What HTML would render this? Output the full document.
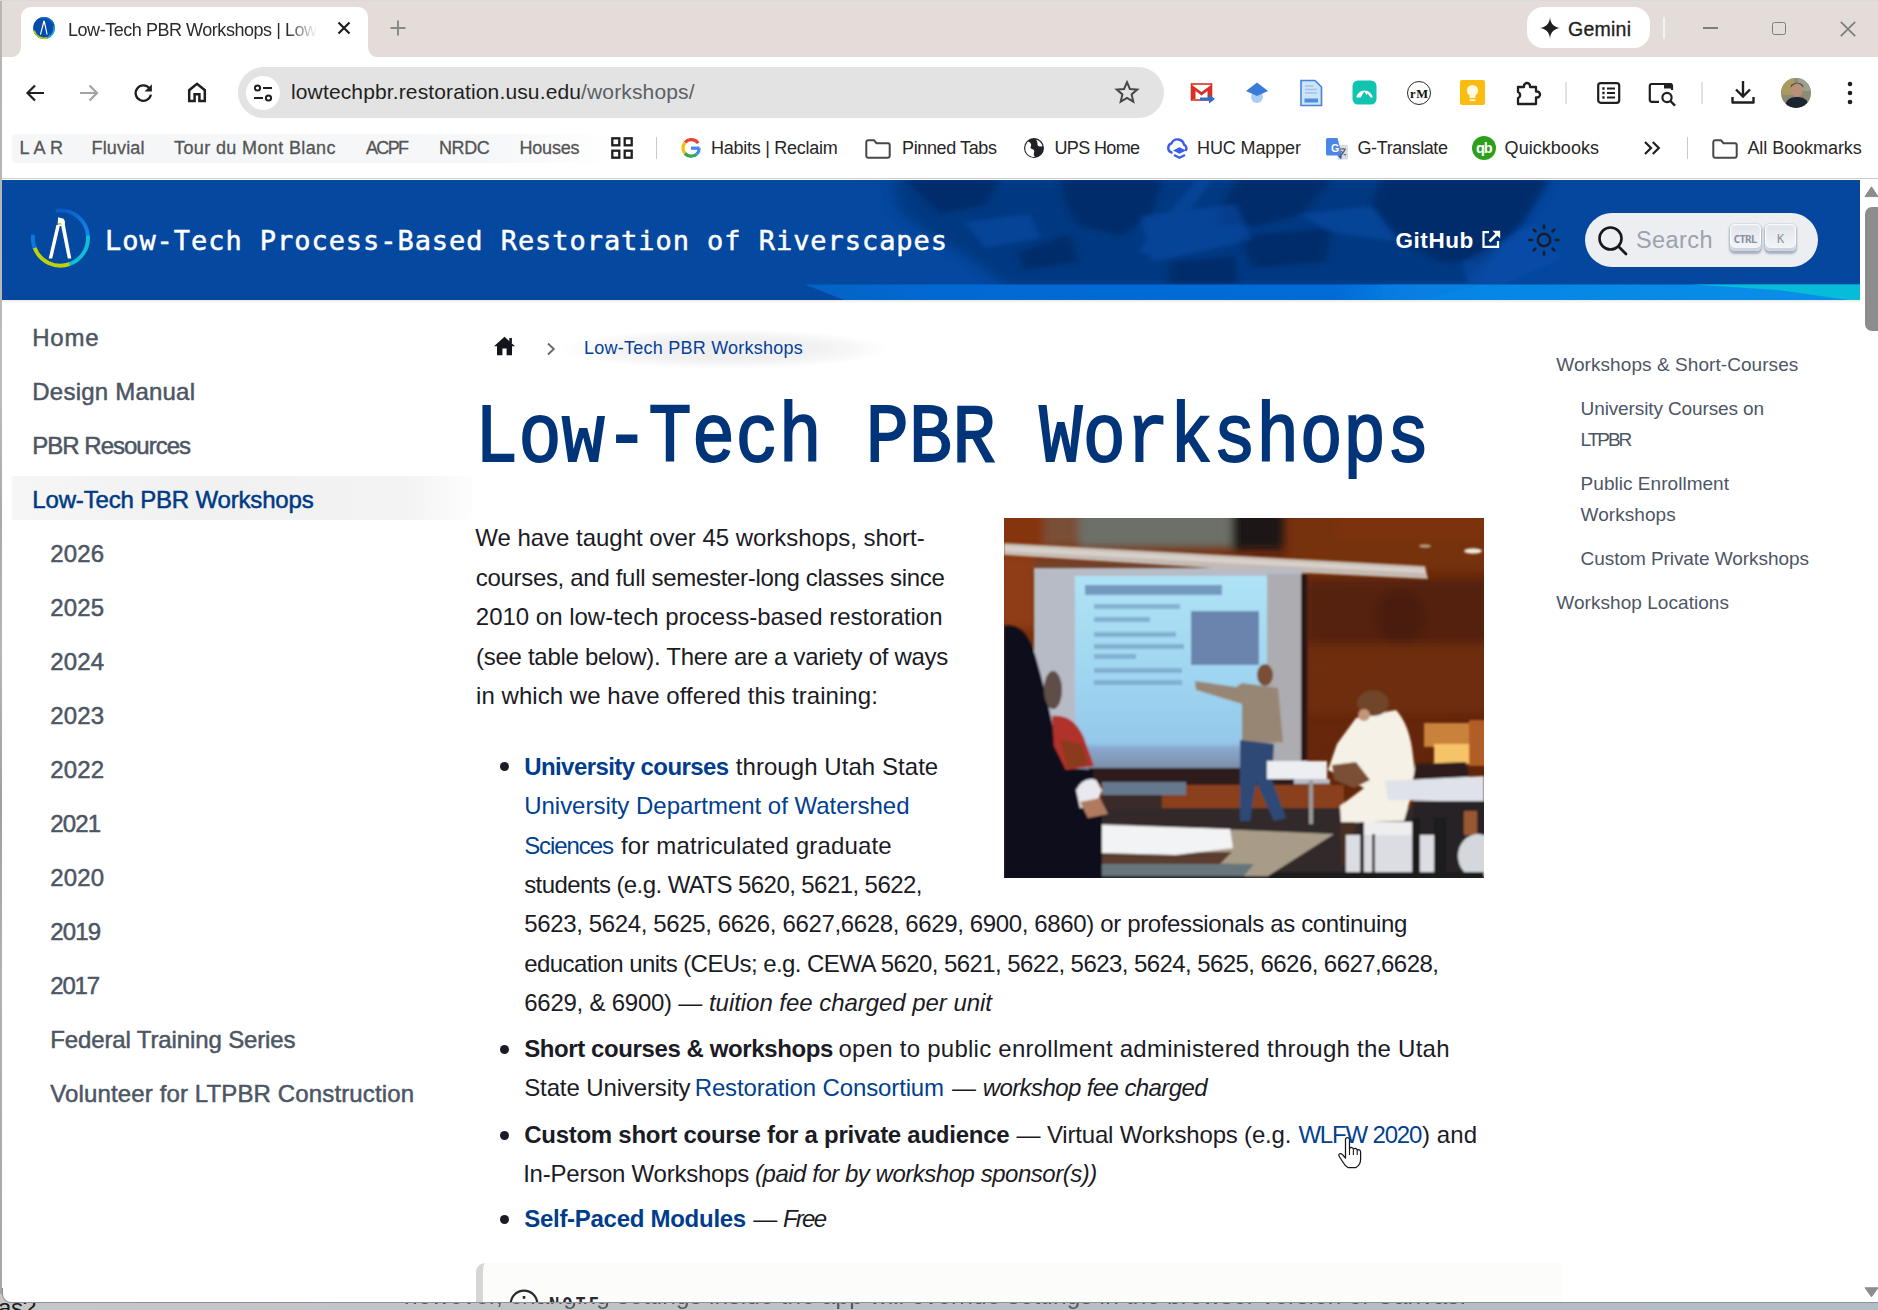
<!DOCTYPE html>
<html lang="en"><head><meta charset="utf-8"><title>Low-Tech PBR Workshops | Low-Tech Process-Based Restoration of Riverscapes</title>
<style>
html,body{margin:0;padding:0;background:#fff}
body{width:1878px;height:1310px;overflow:hidden;position:relative;font-family:'Liberation Sans', 'DejaVu Sans', sans-serif}
.t{position:absolute;display:block;white-space:nowrap;line-height:1;margin:0;padding:0;font-weight:400;font-style:normal;font-kerning:normal;text-decoration:none}
.a{position:absolute}
</style></head><body>
<nav class="g-sidebar">
<div class="a" style="left:12px;top:476px;width:460px;height:44px;background:linear-gradient(90deg,#f6f6f6,#f1f1f1 40%,#f3f3f3 85%,#fdfdfd);border-radius:3px"></div>
<a class="t" style="left:32.30px;top:326.10px;font-size:24px;letter-spacing:0.723px;color:#4d5664;-webkit-text-stroke:0.5px #4d5664;">Home</a>
<a class="t" style="left:32.30px;top:380.10px;font-size:24px;letter-spacing:0.217px;color:#4d5664;-webkit-text-stroke:0.5px #4d5664;">Design Manual</a>
<a class="t" style="left:32.30px;top:434.10px;font-size:24px;letter-spacing:-1.003px;color:#4d5664;-webkit-text-stroke:0.5px #4d5664;">PBR Resources</a>
<a class="t" style="left:32.30px;top:488.10px;font-size:24px;letter-spacing:-0.171px;color:#003a85;-webkit-text-stroke:0.5px #003a85;">Low-Tech PBR Workshops</a>
<a class="t" style="left:50.30px;top:542.10px;font-size:24px;letter-spacing:0.103px;color:#4d5664;-webkit-text-stroke:0.5px #4d5664;">2026</a>
<a class="t" style="left:50.30px;top:596.10px;font-size:24px;letter-spacing:0.103px;color:#4d5664;-webkit-text-stroke:0.5px #4d5664;">2025</a>
<a class="t" style="left:50.30px;top:650.10px;font-size:24px;letter-spacing:0.103px;color:#4d5664;-webkit-text-stroke:0.5px #4d5664;">2024</a>
<a class="t" style="left:50.30px;top:704.10px;font-size:24px;letter-spacing:0.103px;color:#4d5664;-webkit-text-stroke:0.5px #4d5664;">2023</a>
<a class="t" style="left:50.30px;top:758.10px;font-size:24px;letter-spacing:0.103px;color:#4d5664;-webkit-text-stroke:0.5px #4d5664;">2022</a>
<a class="t" style="left:50.30px;top:812.10px;font-size:24px;letter-spacing:-0.897px;color:#4d5664;-webkit-text-stroke:0.5px #4d5664;">2021</a>
<a class="t" style="left:50.30px;top:866.10px;font-size:24px;letter-spacing:0.103px;color:#4d5664;-webkit-text-stroke:0.5px #4d5664;">2020</a>
<a class="t" style="left:50.30px;top:920.10px;font-size:24px;letter-spacing:-0.897px;color:#4d5664;-webkit-text-stroke:0.5px #4d5664;">2019</a>
<a class="t" style="left:50.30px;top:974.10px;font-size:24px;letter-spacing:-1.230px;color:#4d5664;-webkit-text-stroke:0.5px #4d5664;">2017</a>
<a class="t" style="left:50.30px;top:1028.10px;font-size:24px;letter-spacing:-0.133px;color:#4d5664;-webkit-text-stroke:0.5px #4d5664;">Federal Training Series</a>
<a class="t" style="left:50.30px;top:1082.10px;font-size:24px;letter-spacing:0.128px;color:#4d5664;-webkit-text-stroke:0.5px #4d5664;">Volunteer for LTPBR Construction</a>
</nav>
<main class="g-content">
<div class="a" style="left:560px;top:329px;width:330px;height:40px;background:radial-gradient(ellipse 50% 50% at 50% 50%,#efefef 0,#f1f1f1 55%,#f8f8f8 80%,#fff 100%)"></div>
<svg class="a" style="left:493px;top:336px" width="23" height="20" viewBox="0 0 23 20"><path d="M11.5 0.8 L22 10.2 H19 V19.2 H13.6 V12.6 H9.4 V19.2 H4 V10.2 H1 Z" fill="#14141c"/><rect x="16.3" y="2" width="2.6" height="5" fill="#14141c"/></svg>
<svg class="a" style="left:545px;top:342px" width="12" height="14" viewBox="0 0 12 14"><path d="M3 1.5 L8.8 7 L3 12.5" stroke="#6a6a6a" stroke-width="1.9" fill="none"/></svg>
<div class="a" style="left:500px;top:762.0px;width:9px;height:9px;border-radius:5px;background:#1b1b25"></div>
<div class="a" style="left:500px;top:1044.5px;width:9px;height:9px;border-radius:5px;background:#1b1b25"></div>
<div class="a" style="left:500px;top:1130.5px;width:9px;height:9px;border-radius:5px;background:#1b1b25"></div>
<div class="a" style="left:500px;top:1214.9px;width:9px;height:9px;border-radius:5px;background:#1b1b25"></div>
<svg class="a" style="left:1336px;top:1136px" width="30" height="34" viewBox="0 0 30 34"><path d="M9.5 3.5 Q9.5 1.5 11.5 1.5 Q13.5 1.5 13.5 3.5 V13 Q13.7 11.4 15.4 11.4 Q17.2 11.4 17.4 13.4 Q17.8 12.2 19.4 12.3 Q21 12.5 21.2 14.4 Q21.8 13.5 23.2 13.8 Q24.6 14.2 24.6 16 V23 Q24.6 29 20 31.5 H12 Q9 30 6.5 25.5 L3 20 Q2.4 18.5 3.6 17.8 Q5 17.2 6.2 18.4 L9.5 22 Z" fill="#fff" stroke="#15151a" stroke-width="1.25" stroke-linejoin="round"/><path d="M13.5 13 V19 M17.4 14 V19 M21.2 15 V19" stroke="#15151a" stroke-width="1.1"/></svg>
<div class="a" style="left:476px;top:1263px;width:1086px;height:60px;background:#fcfcfb;border-left:7px solid #d6d6d6;border-top-left-radius:9px;box-sizing:border-box"></div>
<svg class="a" style="left:508.5px;top:1288.5px" width="30" height="30" viewBox="0 0 30 30"><circle cx="15" cy="15" r="13.3" stroke="#2a2a30" stroke-width="2.2" fill="none"/><rect x="13.7" y="7" width="2.6" height="2.8" fill="#2a2a30"/></svg>
<svg class="a" style="left:1004px;top:518px" width="480" height="360" viewBox="0 0 480 360">
<defs>
<filter id="pb" x="-2%" y="-2%" width="104%" height="104%"><feGaussianBlur stdDeviation="1.3"/></filter>
<filter id="pb2" x="-5%" y="-5%" width="110%" height="110%"><feGaussianBlur stdDeviation="4"/></filter>
<linearGradient id="wall" x1="0" x2="1" y1="0" y2="1"><stop offset="0" stop-color="#84350f"/><stop offset="0.5" stop-color="#6a280c"/><stop offset="1" stop-color="#5c230a"/></linearGradient>
<linearGradient id="slide" x1="0" x2="0" y1="0" y2="1"><stop offset="0" stop-color="#aee3f6"/><stop offset="0.5" stop-color="#a0d6f0"/><stop offset="0.86" stop-color="#94c8ea"/><stop offset="0.89" stop-color="#8aa6cc"/><stop offset="0.96" stop-color="#8098b4"/><stop offset="1" stop-color="#76889a"/></linearGradient>
<clipPath id="pc"><rect width="480" height="360"/></clipPath>
</defs>
<g clip-path="url(#pc)">
<rect width="480" height="360" fill="url(#wall)"/>
<g filter="url(#pb2)">
<rect x="-10" y="-8" width="60" height="36" fill="#85360f"/>
<rect x="40" y="-8" width="40" height="36" fill="#7a5038"/>
<rect x="75" y="-8" width="160" height="38" fill="#6d7068"/>
<rect x="228" y="-10" width="52" height="42" fill="#1c1716"/>
<rect x="285" y="-8" width="210" height="62" fill="#74300f"/>
<rect x="330" y="-8" width="160" height="30" fill="#7c3311"/>
<ellipse cx="397" cy="100" rx="24" ry="28" fill="#2a1416"/>
<rect x="302" y="62" width="190" height="70" fill="#50200c" opacity="0.8"/>
<rect x="302" y="125" width="190" height="70" fill="#70300f" opacity="0.8"/>
<rect x="-5" y="38" width="36" height="72" fill="#8f3c16"/>
<rect x="30" y="44" width="215" height="10" fill="#6e4a34"/>
</g>
<g filter="url(#pb)">
<path d="M0 25 L240 38 L421 48 L424 61 L240 52 L0 37 Z" fill="#c4bab2"/>
<path d="M0 28 L240 41 L421 51 L421 55 L240 46 L0 33 Z" fill="#d8d0ca"/>
<ellipse cx="469" cy="33" rx="9" ry="2.8" fill="#efe6da"/>
<ellipse cx="421" cy="28" rx="6" ry="1.8" fill="#b89a84"/>
<rect x="30" y="50" width="268" height="200" fill="#b7bbc6"/>
<rect x="263" y="56" width="35" height="192" fill="#adacb0"/>
<rect x="71" y="58" width="192" height="194" fill="url(#slide)"/>
<rect x="81" y="67" width="137" height="10" fill="#6a8cb4" opacity="0.85"/>
<g fill="#7aa6c8" opacity="0.8"><rect x="90" y="86" width="86" height="5"/><rect x="90" y="99" width="56" height="5"/><rect x="90" y="114" width="82" height="5"/><rect x="90" y="126" width="90" height="5"/><rect x="90" y="136" width="42" height="5"/><rect x="90" y="150" width="88" height="5"/><rect x="90" y="162" width="88" height="5"/></g>
<rect x="187" y="93" width="68" height="54" fill="#6a84ae"/>
<rect x="297" y="56" width="6" height="194" fill="#2c1414"/>
<!-- lower area -->
<rect x="85" y="250" width="218" height="17" fill="#2e1e1c"/>
<rect x="150" y="267" width="190" height="24" fill="#8a401a"/>
<rect x="0" y="290" width="480" height="70" fill="#33292a"/>
<rect x="98" y="264" width="84" height="13" fill="#66788c"/>
<rect x="98" y="277" width="60" height="14" fill="#3a2c2c"/>
<!-- presenter -->
<path d="M191 163 L232 169 L238 165 L274 170 L279 224 L238 226 L238 186 L192 172 Z" fill="#988674"/>
<ellipse cx="261" cy="157" rx="8" ry="11" fill="#7a4e34"/>
<path d="M236 222 L270 226 L268 262 L282 300 L270 303 L252 264 L246 303 L236 303 Z" fill="#2f4a74"/>
<!-- center desk -->
<rect x="263" y="243" width="60" height="18" fill="#eceef2"/>
<rect x="290" y="261" width="36" height="5" fill="#b8bcc4"/>
<rect x="305" y="262" width="4" height="44" fill="#9a9a9a"/>
<!-- right person -->
<path d="M352 200 L392 192 Q404 205 408 230 L412 262 L400 303 L337 305 L336 288 L360 270 L324 252 L333 226 Z" fill="#f6f1e6"/>
<path d="M328 247 L352 244 L366 262 L350 270 L330 262 Z" fill="#7a5034"/>
<ellipse cx="369" cy="185" rx="16" ry="13" fill="#70452a"/>
<ellipse cx="360" cy="197" rx="6" ry="6" fill="#c49678"/>
<path d="M336 304 L351 304 L350 346 L338 348 Z" fill="#4a2e24"/>
<!-- lamp etc -->
<rect x="420" y="205" width="46" height="24" fill="#c8823a"/>
<rect x="430" y="226" width="35" height="20" fill="#f6c468"/>
<rect x="465" y="202" width="20" height="46" fill="#b25c26"/>
<path d="M412 246 L462 244 L466 262 L408 266 Z" fill="#2e1c1c"/>
<path d="M381 263 L480 258 L480 284 L384 282 Z" fill="#dfe2ea"/>
<rect x="409" y="283" width="75" height="80" fill="#262226"/>
<rect x="460" y="293" width="13" height="24" fill="#9a5830"/>
<rect x="360" y="304" width="50" height="13" fill="#eeeeee"/>
<rect x="342" y="317" width="92" height="40" fill="#dcdde2"/>
<rect x="356" y="304" width="4" height="56" fill="#2a2426"/>
<rect x="368" y="316" width="3" height="40" fill="#3a3436"/>
<rect x="408" y="300" width="8" height="60" fill="#1e1a1e"/>
<rect x="430" y="300" width="12" height="60" fill="#1e1a1e"/>
<ellipse cx="474" cy="338" rx="20" ry="22" fill="#d4d8dc"/>
<rect x="0" y="354" width="480" height="8" fill="#1e1a1c"/>
<!-- bottom table -->
<path d="M98 306 L330 316 L264 358 L98 358 Z" fill="#a89c88"/>
<path d="M98 344 L250 346 L240 358 L98 358 Z" fill="#66767a"/>
<path d="M98 334 L228 334 L216 346 L98 346 Z" fill="#5a3c2e"/>
<path d="M98 307 L226 311 L229 330 L172 337 L98 335 Z" fill="#f2f3f5"/>
<!-- left silhouettes -->
<path d="M0 108 Q22 104 32 140 Q42 175 48 205 L62 250 L90 252 L86 268 L98 300 L98 362 L0 362 Z" fill="#0c0e1a"/>
<ellipse cx="49" cy="172" rx="9" ry="19" fill="#5e4e46"/>
<path d="M48 198 Q70 196 80 220 L90 248 L62 252 L50 228 Z" fill="#b0302c"/>
<path d="M56 222 L78 226 L84 246 L64 250 Z" fill="#8a3a1c"/>
<path d="M72 272 Q80 258 92 262 L98 272 L92 288 L76 290 Z" fill="#e8e8ee"/>
<path d="M76 284 L96 280 L104 296 L84 300 Z" fill="#b07a60"/>
</g>
</g>
</svg>
<a class="t" style="left:584.00px;top:339.30px;font-size:18px;letter-spacing:0.240px;color:#073f97;">Low-Tech PBR Workshops</a>
<h1 class="t" style="left:475.00px;top:397.30px;font-size:84px;letter-spacing:0.477px;transform:scaleX(0.853);transform-origin:0 0;color:#013478;font-family:'Liberation Mono', 'DejaVu Sans Mono', monospace;-webkit-text-stroke:2px #013478;">Low-Tech PBR Workshops</h1>
<p class="t" style="left:475.30px;top:526.20px;font-size:24px;letter-spacing:-0.027px;color:#1b1b25;">We have taught over 45 workshops, short-</p>
<p class="t" style="left:475.80px;top:565.70px;font-size:24px;letter-spacing:-0.316px;color:#1b1b25;">courses, and full semester-long classes since</p>
<p class="t" style="left:475.80px;top:605.30px;font-size:24px;letter-spacing:-0.006px;color:#1b1b25;">2010 on low-tech process-based restoration</p>
<p class="t" style="left:476.00px;top:644.80px;font-size:24px;letter-spacing:-0.285px;color:#1b1b25;">(see table below). There are a variety of ways</p>
<p class="t" style="left:476.00px;top:684.40px;font-size:24px;letter-spacing:0.053px;color:#1b1b25;">in which we have offered this training:</p>
<a class="t" style="left:524.20px;top:755.00px;font-size:24px;letter-spacing:-0.575px;color:#013d8c;font-weight:700;">University courses</a>
<span class="t" style="left:735.80px;top:755.00px;font-size:24px;letter-spacing:0.055px;color:#1b1b25;">through Utah State</span>
<a class="t" style="left:524.20px;top:794.30px;font-size:24px;letter-spacing:-0.019px;color:#023f8f;">University Department of Watershed</a>
<a class="t" style="left:524.20px;top:833.60px;font-size:24px;letter-spacing:-1.099px;color:#023f8f;">Sciences</a>
<span class="t" style="left:621.00px;top:833.60px;font-size:24px;letter-spacing:0.158px;color:#1b1b25;">for matriculated graduate</span>
<span class="t" style="left:524.20px;top:872.70px;font-size:24px;letter-spacing:-0.576px;color:#1b1b25;">students (e.g. WATS 5620, 5621, 5622,</span>
<span class="t" style="left:524.20px;top:911.80px;font-size:24px;letter-spacing:-0.361px;color:#1b1b25;">5623, 5624, 5625, 6626, 6627,6628, 6629, 6900, 6860) or professionals as continuing</span>
<span class="t" style="left:524.20px;top:951.50px;font-size:24px;letter-spacing:-0.569px;color:#1b1b25;">education units (CEUs; e.g. CEWA 5620, 5621, 5622, 5623, 5624, 5625, 6626, 6627,6628,</span>
<span class="t" style="left:524.20px;top:990.80px;font-size:24px;letter-spacing:-0.240px;color:#1b1b25;">6629, &amp; 6900) —</span>
<em class="t" style="left:709.00px;top:990.80px;font-size:24px;letter-spacing:-0.045px;color:#1b1b25;font-style:italic;">tuition fee charged per unit</em>
<strong class="t" style="left:524.20px;top:1037.40px;font-size:24px;letter-spacing:-0.402px;color:#1b1b25;font-weight:700;">Short courses &amp; workshops</strong>
<span class="t" style="left:838.50px;top:1037.40px;font-size:24px;letter-spacing:0.246px;color:#1b1b25;">open to public enrollment administered through the Utah</span>
<span class="t" style="left:524.20px;top:1076.40px;font-size:24px;letter-spacing:-0.118px;color:#1b1b25;">State University</span>
<a class="t" style="left:694.70px;top:1076.40px;font-size:24px;letter-spacing:-0.129px;color:#023f8f;">Restoration Consortium</a>
<span class="t" style="left:952.00px;top:1076.40px;font-size:24px;letter-spacing:-1.000px;color:#1b1b25;">—</span>
<em class="t" style="left:982.70px;top:1076.40px;font-size:24px;letter-spacing:-0.592px;color:#1b1b25;font-style:italic;">workshop fee charged</em>
<strong class="t" style="left:524.20px;top:1122.50px;font-size:24px;letter-spacing:-0.262px;color:#1b1b25;font-weight:700;">Custom short course for a private audience</strong>
<span class="t" style="left:1016.60px;top:1122.50px;font-size:24px;letter-spacing:-0.185px;color:#1b1b25;">— Virtual Workshops (e.g.</span>
<a class="t" style="left:1298.40px;top:1122.50px;font-size:24px;letter-spacing:-1.172px;color:#023f8f;">WLFW 2020</a>
<span class="t" style="left:1422.00px;top:1122.50px;font-size:24px;letter-spacing:0.074px;color:#1b1b25;">) and</span>
<span class="t" style="left:523.20px;top:1162.40px;font-size:24px;letter-spacing:-0.235px;color:#1b1b25;">In-Person Workshops</span>
<em class="t" style="left:755.00px;top:1162.40px;font-size:24px;letter-spacing:-0.474px;color:#1b1b25;font-style:italic;">(paid for by workshop sponsor(s))</em>
<a class="t" style="left:524.20px;top:1207.30px;font-size:24px;letter-spacing:-0.278px;color:#013d8c;font-weight:700;">Self-Paced Modules</a>
<span class="t" style="left:753.20px;top:1207.30px;font-size:24px;letter-spacing:-1.600px;color:#1b1b25;">—</span>
<em class="t" style="left:783.00px;top:1207.30px;font-size:24px;letter-spacing:-1.786px;color:#1b1b25;font-style:italic;">Free</em>
<div class="t" style="left:549.00px;top:1295.60px;font-size:17px;letter-spacing:3.016px;color:#2a2a30;font-weight:700;font-family:'DejaVu Sans Mono', 'Liberation Mono', monospace;">NOTE</div>
</main>
<aside class="g-toc">
<a class="t" style="left:1556.30px;top:354.90px;font-size:19px;letter-spacing:0.066px;color:#4d5664;">Workshops &amp; Short-Courses</a>
<a class="t" style="left:1580.60px;top:398.80px;font-size:19px;letter-spacing:-0.122px;color:#4d5664;">University Courses on</a>
<a class="t" style="left:1580.60px;top:429.80px;font-size:19px;letter-spacing:-2.036px;color:#4d5664;">LTPBR</a>
<a class="t" style="left:1580.60px;top:474.00px;font-size:19px;letter-spacing:0.035px;color:#4d5664;">Public Enrollment</a>
<a class="t" style="left:1580.60px;top:505.40px;font-size:19px;letter-spacing:0.052px;color:#4d5664;">Workshops</a>
<a class="t" style="left:1580.60px;top:549.00px;font-size:19px;letter-spacing:-0.063px;color:#4d5664;">Custom Private Workshops</a>
<a class="t" style="left:1556.30px;top:593.00px;font-size:19px;letter-spacing:0.052px;color:#4d5664;">Workshop Locations</a>
</aside>
<header class="g-site-header">
<svg class="a" style="left:2px;top:180px" width="1858" height="120" viewBox="0 0 1858 120">
<defs>
<linearGradient id="hb" x1="0" x2="1" y1="0" y2="0"><stop offset="0" stop-color="#05489f"/><stop offset="0.45" stop-color="#04489f"/><stop offset="0.85" stop-color="#04479f"/><stop offset="1" stop-color="#05479e"/></linearGradient>
<linearGradient id="lb" gradientUnits="userSpaceOnUse" x1="805" x2="1858" y1="0" y2="0"><stop offset="0" stop-color="#0462c4"/><stop offset="0.12" stop-color="#0369d2"/><stop offset="0.5" stop-color="#026bd6"/><stop offset="0.58" stop-color="#0584e4"/><stop offset="1" stop-color="#0a8fe8"/></linearGradient>
<filter id="bl" x="-5%" y="-30%" width="110%" height="160%"><feGaussianBlur stdDeviation="7 4"/></filter>
<filter id="bl2" x="-5%" y="-30%" width="110%" height="160%"><feGaussianBlur stdDeviation="3.5 2"/></filter>
<clipPath id="hc"><rect width="1858" height="120"/></clipPath>
</defs>
<g clip-path="url(#hc)">
<rect width="1858" height="120" fill="url(#hb)"/>
<polygon filter="url(#bl)" points="890,0 1546,0 1523,35 1493,70 1468,105 1003,105 963,75 928,55 898,32" fill="#04397f" opacity="0.92"/>
<g filter="url(#bl2)" fill="#022a68" opacity="0.85">
<polygon points="1058,0 1160,0 1150,34 1120,56 1076,46 1064,25"/>
<polygon points="1234,0 1330,0 1300,34 1258,46 1214,44 1224,20"/>
<polygon points="1016,72 1068,54 1076,82 1022,90"/>
<polygon points="1378,0 1546,0 1520,44 1480,82 1438,82 1398,62 1370,26"/>
<polygon points="1238,56 1330,48 1324,82 1250,88"/>
<polygon points="903,0 998,0 983,25 938,34"/>
<polygon points="1168,82 1233,76 1236,104 1166,104"/>
</g>
<g filter="url(#bl2)" fill="#0a50ae" opacity="0.5">
<polygon points="1136,72 1194,0 1210,0 1154,76"/>
<polygon points="1138,36 1234,24 1250,60 1150,82"/>
<polygon points="1460,82 1530,44 1560,78 1500,105 1466,105"/>
<polygon points="1298,34 1370,26 1398,62 1328,52"/>
<polygon points="963,42 1028,34 1038,58 983,68"/>
</g>
<path d="M803 104.6 L1858 104.6 L1858 120 L842 120 Z" fill="url(#lb)"/>
<path d="M1690 104.6 L1858 104.6 L1858 120 L1846 120 L1780 110.5 Z" fill="#06bcd8"/>
<path d="M1380 104.6 L1480 104.6 L1420 120 L1380 120 Z" fill="#0a7be0" opacity="0.5"/>
</g>
</svg>
<div class="a" style="left:2px;top:300px;width:1858px;height:3px;background:linear-gradient(180deg,rgba(0,0,0,.09),rgba(0,0,0,0))"></div>
<svg class="a" style="left:28px;top:206px" width="66" height="66" viewBox="0 0 66 66">
<defs><linearGradient id="lg1" x1="0.2" y1="0" x2="1" y2="1"><stop offset="0" stop-color="#0a5cc4"/><stop offset="0.5" stop-color="#0f74d8"/><stop offset="1" stop-color="#1488e8"/></linearGradient></defs>
<path d="M27.61 4.82 A27.6 27.6 0 0 1 59.93 30.07" stroke="url(#lg1)" stroke-width="3.9" fill="none"/>
<path d="M59.89 29.59 A27.6 27.6 0 0 1 40.93 58.25" stroke="#0fbfd8" stroke-width="3.9" fill="none"/>
<path d="M41.39 58.10 A27.6 27.6 0 0 1 6.46 41.44" stroke="#bdd20c" stroke-width="3.9" fill="none"/>
<path d="M6.63 41.89 A27.6 27.6 0 0 1 5.01 28.64" stroke="#0f78dc" stroke-width="3.9" fill="none"/>
<path d="M30.1 11.2 L35.6 12.8 L36.9 15.2 L36.9 20 L29.6 20 Z M28.4 19 L32 19 L24.2 52.6 L20.7 52.6 Z M33 19 L36.9 19 L43.3 52.6 L39.8 52.6 Z" fill="#fff"/>
<rect x="29.9" y="16.9" width="3.4" height="1.8" rx="0.8" fill="#bdd20c"/>
</svg>
<svg class="a" style="left:1481px;top:229px" width="21" height="20" viewBox="0 0 21 20"><path d="M8 3.2 H2.5 V17.8 H17 V12" stroke="#fff" stroke-width="2.2" fill="none"/><path d="M11.5 1.8 H19.2 V9.5 Z" fill="#fff"/><path d="M8.5 12.5 L17 4" stroke="#fff" stroke-width="2.6" fill="none"/></svg>
<svg class="a" style="left:1526px;top:222px" width="36" height="36" viewBox="0 0 36 36"><g stroke="#171b2a" stroke-width="2.4" fill="none" stroke-linecap="round"><circle cx="18" cy="18" r="6.2"/><path d="M18 3.5 V6 M18 30 V32.5 M3.5 18 H6 M30 18 H32.5 M7.7 7.7 L9.5 9.5 M26.5 26.5 L28.3 28.3 M7.7 28.3 L9.5 26.5 M26.5 9.5 L28.3 7.7"/></g></svg>
<div class="a" style="left:1585px;top:213px;width:233px;height:54px;border-radius:27px;background:#eceef2"></div>
<svg class="a" style="left:1595px;top:224px" width="34" height="34" viewBox="0 0 34 34"><circle cx="15.5" cy="14.5" r="11" stroke="#17171c" stroke-width="2.6" fill="none"/><path d="M23.5 22.5 L31 30" stroke="#17171c" stroke-width="2.8" stroke-linecap="round"/></svg>
<div class="a" style="left:1730px;top:224px;width:31px;height:27px;border-radius:5px;background:linear-gradient(180deg,#dfe3ea,#f6f7fa);box-shadow:inset 0 -3px 0 #cdd3df,inset 0 0 1.5px 1px #fff,0 1.5px 2px 1px rgba(40,60,100,.35)"></div>
<div class="a" style="left:1765px;top:224px;width:31px;height:27px;border-radius:5px;background:linear-gradient(180deg,#dfe3ea,#f6f7fa);box-shadow:inset 0 -3px 0 #cdd3df,inset 0 0 1.5px 1px #fff,0 1.5px 2px 1px rgba(40,60,100,.35)"></div>
<div class="t" style="left:105.00px;top:226.80px;font-size:27px;letter-spacing:0.948px;color:#fff;font-family:'DejaVu Sans Mono', 'Liberation Mono', monospace;-webkit-text-stroke:0.5px #fff;">Low-Tech Process-Based Restoration of Riverscapes</div>
<a class="t" style="left:1395.40px;top:229.80px;font-size:22.5px;letter-spacing:0.583px;color:#fff;font-weight:700;">GitHub</a>
<div class="t" style="left:1636.00px;top:228.90px;font-size:23.5px;letter-spacing:0.406px;color:#9ca2ad;">Search</div>
<div class="t" style="left:1733.50px;top:233.80px;font-size:11px;letter-spacing:-0.833px;color:#8a90a0;font-weight:700;font-family:'DejaVu Sans Mono', 'Liberation Mono', monospace;">CTRL</div>
<div class="t" style="left:1777.00px;top:232.80px;font-size:12px;letter-spacing:0.766px;color:#8a90a0;font-family:'DejaVu Sans Mono', 'Liberation Mono', monospace;">K</div>
</header>
<div class="g-browser-chrome">
<div class="a" style="left:0;top:0;width:1878px;height:57px;background:#e3dcd9"></div>
<div class="a" style="left:0;top:0;width:1878px;height:1px;background:#d9dadd"></div>
<div class="a" style="left:0;top:57px;width:1878px;height:121px;background:#fff"></div>
<svg class="a" style="left:0;top:0" width="400" height="58" viewBox="0 0 400 58"><path d="M9 57.5 C17 57.5 21 53 21 46 L21 18 C21 11 25 7 32 7 L357 7 C364 7 368 11 368 18 L368 46 C368 53 372 57.5 380 57.5 Z" fill="#fff"/></svg>
<svg class="a" style="left:32px;top:16px" width="24" height="24" viewBox="0 0 24 24"><circle cx="12" cy="12" r="10.9" fill="#064baa"/><path d="M8.51 2.42 A10.2 10.2 0 0 1 21.58 8.51" stroke="#0d6fd6" stroke-width="1.5" fill="none"/><path d="M22.05 10.23 A10.2 10.2 0 0 1 15.49 21.58" stroke="#12b8d8" stroke-width="1.5" fill="none"/><path d="M15.15 21.70 A10.2 10.2 0 0 1 2.15 14.64" stroke="#b4d10f" stroke-width="1.7" fill="none"/><path d="M11.4 4.6 L12.9 4.9 L15.6 18.6 L14.6 18.8 L12.1 7.2 L8.9 18.8 L7.9 18.6 Z" fill="#fff"/></svg>
<svg class="a" style="left:336px;top:20px" width="16" height="16" viewBox="0 0 16 16"><path d="M2.5 2.5 L13.5 13.5 M13.5 2.5 L2.5 13.5" stroke="#1f1f1f" stroke-width="2.2" fill="none"/></svg>
<svg class="a" style="left:389px;top:19px" width="18" height="18" viewBox="0 0 18 18"><path d="M9 1.5 V16.5 M1.5 9 H16.5" stroke="#8a8a8a" stroke-width="2" fill="none"/></svg>
<div class="a" style="left:1527px;top:7px;width:123px;height:41px;border-radius:16px;background:#fff"></div>
<svg class="a" style="left:1539px;top:17px" width="22" height="22" viewBox="0 0 22 22"><path d="M11 0.5 C11.6 6.8 15.2 10.4 21.5 11 C15.2 11.6 11.6 15.2 11 21.5 C10.4 15.2 6.8 11.6 0.5 11 C6.8 10.4 10.4 6.8 11 0.5 Z" fill="#1f1f1f"/></svg>
<div class="a" style="left:1663px;top:17px;width:2px;height:22px;background:#f4f1ef"></div>
<div class="a" style="left:1703px;top:27px;width:15px;height:1.6px;background:#7d7d7d"></div>
<div class="a" style="left:1772px;top:21.5px;width:11.6px;height:11.6px;border:1.7px solid #7d7d7d;border-radius:2.5px"></div>
<svg class="a" style="left:1840px;top:21px" width="16" height="16" viewBox="0 0 16 16"><path d="M0.8 0.8 L15.2 15.2 M15.2 0.8 L0.8 15.2" stroke="#7d7d7d" stroke-width="1.7" fill="none"/></svg>
<svg class="a" style="left:24px;top:81px" width="24" height="24" viewBox="0 0 24 24"><path d="M20 12 H4 M11 4.5 L3.5 12 L11 19.5" stroke="#1f1f1f" stroke-width="2.2" fill="none" stroke-linejoin="miter"/></svg>
<svg class="a" style="left:77px;top:81px" width="24" height="24" viewBox="0 0 24 24"><path d="M3 12 H19.5 M12.5 4.5 L20 12 L12.5 19.5" stroke="#a3a3a3" stroke-width="2.2" fill="none"/></svg>
<svg class="a" style="left:131px;top:81px" width="24" height="24" viewBox="0 0 24 24"><path d="M18.6 7.6 A7.7 7.7 0 1 0 19.9 13.6" stroke="#1f1f1f" stroke-width="2.3" fill="none"/><path d="M20.9 3.2 V10.6 H13.5 Z" fill="#1f1f1f"/></svg>
<svg class="a" style="left:185px;top:80px" width="24" height="24" viewBox="0 0 24 24"><path d="M4.2 21 V10.2 L12 3.8 L19.8 10.2 V21 H14.4 V14.2 H9.6 V21 Z" stroke="#1f1f1f" stroke-width="2.5" fill="none" stroke-linejoin="miter"/></svg>
<div class="a" style="left:238px;top:67px;width:926px;height:51px;border-radius:26px;background:#e3e3e3"></div>
<div class="a" style="left:246px;top:75.5px;width:34px;height:34px;border-radius:17px;background:#fff"></div>
<svg class="a" style="left:251px;top:81px" width="24" height="24" viewBox="0 0 24 24"><g stroke="#1f1f1f" stroke-width="2" fill="none"><circle cx="6.5" cy="7" r="2.6"/><path d="M12 7 H21"/><circle cx="17.5" cy="17" r="2.6"/><path d="M3 17 H12"/></g></svg>
<svg class="a" style="left:1114px;top:79px" width="26" height="26" viewBox="0 0 26 26"><path d="M13 3.2 L15.9 10 L23.2 10.6 L17.6 15.4 L19.3 22.6 L13 18.8 L6.7 22.6 L8.4 15.4 L2.8 10.6 L10.1 10 Z" stroke="#474747" stroke-width="2" fill="none" stroke-linejoin="miter"/></svg>
<svg class="a" style="left:1190px;top:81px" width="28" height="24" viewBox="0 0 28 24"><rect x="1.5" y="3" width="20" height="16" fill="#fff" stroke="#d93025" stroke-width="1.6"/><path d="M2 4 V18 H5.5 V10 L11.5 14.5 L17.5 10 V18 H21 V4 L11.5 11 Z" fill="#d93025"/><path d="M10 16.5 H19 V13.5 L25 18 L19 22.5 V19.5 H10 Z" fill="#2f6fc4"/></svg>
<svg class="a" style="left:1244px;top:80px" width="26" height="26" viewBox="0 0 26 26"><circle cx="13" cy="17" r="6" fill="#a9cdf3"/><path d="M13 2.5 L24 11 L13 16 L2 11 Z" fill="#3a7bd8"/></svg>
<svg class="a" style="left:1299px;top:79px" width="24" height="28" viewBox="0 0 24 28"><path d="M2 1.5 H16 L22.5 8 V26.5 H2 Z" fill="#cfe3f7" stroke="#3f86d9" stroke-width="1.6"/><rect x="5.5" y="19.5" width="13.5" height="4" fill="#4c8fe0"/><path d="M6 7 H14 M6 10.5 H18 M6 14 H18" stroke="#9cc3ee" stroke-width="1.6"/></svg>
<svg class="a" style="left:1352px;top:80px" width="25" height="25" viewBox="0 0 25 25"><rect x="0.5" y="0.5" width="24" height="24" rx="5.5" fill="#11c4b0"/><path d="M4.3 17.6 A8.3 8.3 0 0 1 20.7 17.6 L18.6 17.6 L15.6 13.4 L14.4 15 L12.3 11.6 L8.6 17.6 Z" fill="#fff"/></svg>
<div class="a" style="left:1406.5px;top:80.5px;width:22px;height:22px;border-radius:12px;border:1.2px solid #2a2a2a;background:#fff"></div>
<svg class="a" style="left:1460px;top:80px" width="25" height="25" viewBox="0 0 25 25"><rect x="0" y="0" width="25" height="25" rx="2" fill="#fbbc10"/><circle cx="12.5" cy="10.5" r="5.6" fill="#fff8e3"/><rect x="9.6" y="15" width="5.8" height="3" fill="#fff8e3"/><rect x="9.6" y="19.3" width="5.8" height="1.8" fill="#fff8e3"/></svg>
<svg class="a" style="left:1514px;top:79px" width="28" height="28" viewBox="0 0 28 28"><path d="M4 8 H10 V7 A3 3 0 0 1 16 7 V8 H22 V12.5 H23 A3 3 0 0 1 23 18.5 H22 V25 H4 V19 A3.2 3.2 0 0 0 4 13 Z" stroke="#1f1f1f" stroke-width="2.3" fill="none" stroke-linejoin="round"/></svg>
<div class="a" style="left:1565px;top:82px;width:2px;height:22px;background:#e6e1de"></div>
<svg class="a" style="left:1596px;top:80px" width="26" height="26" viewBox="0 0 26 26"><rect x="2.2" y="3.2" width="21" height="19.6" rx="2.5" stroke="#1f1f1f" stroke-width="2.2" fill="none"/><path d="M11 8.5 H19 M11 13 H19 M11 17.5 H19" stroke="#1f1f1f" stroke-width="2.1"/><path d="M6.3 8.5 H8.6 M6.3 13 H8.6 M6.3 17.5 H8.6" stroke="#1f1f1f" stroke-width="2.4"/></svg>
<svg class="a" style="left:1647px;top:80px" width="30" height="28" viewBox="0 0 30 28"><path d="M12 21.8 H4.8 A2 2 0 0 1 2.8 19.8 V6 A2 2 0 0 1 4.8 4 H23 A2 2 0 0 1 25 6 V10" stroke="#1f1f1f" stroke-width="2.2" fill="none"/><path d="M17 3.5 H25 V8.5 H17 Z" fill="#1f1f1f"/><circle cx="20" cy="17.5" r="4.6" stroke="#1f1f1f" stroke-width="2.2" fill="none"/><path d="M23.4 21 L28 25.6" stroke="#1f1f1f" stroke-width="2.4"/></svg>
<div class="a" style="left:1701px;top:82px;width:2px;height:22px;background:#e6e1de"></div>
<svg class="a" style="left:1729px;top:79px" width="28" height="28" viewBox="0 0 28 28"><path d="M14 2 V17 M7 10.5 L14 17.5 L21 10.5" stroke="#1f1f1f" stroke-width="2.4" fill="none"/><path d="M3.5 18 V23.5 H24.5 V18" stroke="#1f1f1f" stroke-width="2.4" fill="none" stroke-linejoin="round"/></svg>
<svg class="a" style="left:1780px;top:77px" width="32" height="32" viewBox="0 0 32 32"><defs><clipPath id="av"><circle cx="16" cy="16" r="15"/></clipPath></defs><g clip-path="url(#av)"><rect width="32" height="32" fill="#8d8a78"/><rect x="0" y="0" width="14" height="18" fill="#a99a62"/><rect x="18" y="0" width="14" height="14" fill="#9aa08c"/><ellipse cx="17" cy="13" rx="6" ry="7" fill="#b98f78"/><path d="M10.5 11 Q17 2 23.5 11 L23 8 Q17 3 11 8 Z" fill="#5a4a40"/><path d="M4 32 Q6 19 17 20 Q28 19 30 32 Z" fill="#1d2530"/></g></svg>
<svg class="a" style="left:1845px;top:80px" width="10" height="26" viewBox="0 0 10 26"><circle cx="5" cy="4" r="2.3" fill="#1f1f1f"/><circle cx="5" cy="13" r="2.3" fill="#1f1f1f"/><circle cx="5" cy="22" r="2.3" fill="#1f1f1f"/></svg>
<div class="a" style="left:12px;top:134px;width:600px;height:29px;background:linear-gradient(90deg,#f5f6f8,#f6f7f9 80%,#fff);border-radius:4px"></div>
<svg class="a" style="left:611px;top:137px" width="22" height="22" viewBox="0 0 22 22"><g stroke="#1f1f1f" stroke-width="2.3" fill="none"><rect x="1.3" y="1.3" width="7" height="7"/><rect x="13.7" y="1.3" width="7" height="7"/><rect x="1.3" y="13.7" width="7" height="7"/><rect x="13.7" y="13.7" width="7" height="7"/></g></svg>
<div class="a" style="left:655.5px;top:137px;width:1.5px;height:22px;background:#cfcac7"></div>
<svg class="a" style="left:681px;top:138px" width="20" height="20" viewBox="0 0 20 20"><path d="M18.6 10.2 H10 " stroke="#4285f4" stroke-width="3.2" fill="none"/><path d="M17.2 5.2 A8.2 8.2 0 0 0 4 4.6" stroke="#ea4335" stroke-width="3.2" fill="none"/><path d="M4 4.6 A8.2 8.2 0 0 0 4 15.4" stroke="#fbbc05" stroke-width="3.2" fill="none"/><path d="M4 15.4 A8.2 8.2 0 0 0 16 15.8" stroke="#34a853" stroke-width="3.2" fill="none"/><path d="M16 15.8 A8.2 8.2 0 0 0 18.2 10.2" stroke="#4285f4" stroke-width="3.2" fill="none"/></svg>
<svg class="a" style="left:865px;top:139px" width="26" height="20" viewBox="0 0 26 20"><path d="M1.3 3 A1.8 1.8 0 0 1 3 1.3 H9 L11.5 4.2 H23 A1.8 1.8 0 0 1 24.7 6 V17 A1.8 1.8 0 0 1 23 18.7 H3 A1.8 1.8 0 0 1 1.3 17 Z" stroke="#474747" stroke-width="2" fill="none"/></svg>
<svg class="a" style="left:1023px;top:137px" width="22" height="22" viewBox="0 0 22 22"><circle cx="11" cy="11" r="10" fill="#202124"/><path d="M5 4.5 Q9 6 8 9 Q6.5 11 9 12 Q12 12.5 11 15.5 Q10 18 12 20 Q5 20 2.5 14 Q1.5 8 5 4.5 Z M13 2.5 Q18 4 19.5 9 Q16 10.5 14.5 8 Q15 5 13 2.5 Z" fill="#fff"/></svg>
<svg class="a" style="left:1165px;top:137px" width="24" height="24" viewBox="0 0 24 24"><path d="M6.5 15.5 A4.8 4.8 0 0 1 6.5 6.4 A6.6 6.6 0 0 1 19 7.6 A4 4 0 0 1 21 13" stroke="#3b5bf0" stroke-width="2.4" fill="none" stroke-linecap="round"/><path d="M8 13.5 L14.5 10.2 L21 13.5 L14.5 16.8 Z" fill="#3b5bf0"/><path d="M9 18 L14.5 20.8 L20 18" stroke="#3b5bf0" stroke-width="2.2" fill="none"/></svg>
<svg class="a" style="left:1325px;top:137px" width="24" height="24" viewBox="0 0 24 24"><path d="M10 8 H21.5 A1.5 1.5 0 0 1 23 9.5 V21 A1.5 1.5 0 0 1 21.5 22.5 H13 Z" fill="#d9dce0"/><path d="M2.5 1 H12.5 L17 18.5 H2.5 A1.5 1.5 0 0 1 1 17 V2.5 A1.5 1.5 0 0 1 2.5 1 Z" fill="#4a86e8"/><path d="M12.5 18.5 L16 22.5 L17 18.5 Z" fill="#2a5fc0"/><path d="M15 12 H21 M18 11 V12 M20 12 Q19 16 15 18.5 M16.3 14 Q17.5 16.5 21 18.3" stroke="#5f6368" stroke-width="1.2" fill="none"/></svg>
<div class="a" style="left:1472px;top:136px;width:24px;height:24px;border-radius:12px;background:#2ca01c"></div>
<svg class="a" style="left:1643px;top:140px" width="18" height="16" viewBox="0 0 18 16"><path d="M2 2 L8 8 L2 14 M9.8 2 L15.8 8 L9.8 14" stroke="#1f1f1f" stroke-width="2.2" fill="none"/></svg>
<div class="a" style="left:1686.5px;top:137px;width:1.5px;height:22px;background:#cfcac7"></div>
<svg class="a" style="left:1712px;top:139px" width="26" height="20" viewBox="0 0 26 20"><path d="M1.3 3 A1.8 1.8 0 0 1 3 1.3 H9 L11.5 4.2 H23 A1.8 1.8 0 0 1 24.7 6 V17 A1.8 1.8 0 0 1 23 18.7 H3 A1.8 1.8 0 0 1 1.3 17 Z" stroke="#474747" stroke-width="2" fill="none"/></svg>
<div class="a" style="left:0;top:177.5px;width:1878px;height:1.2px;background:#cfcfcf"></div>
<div class="t" style="left:68.00px;top:21.20px;font-size:18px;letter-spacing:-0.461px;color:#2b2b2b;-webkit-mask-image:linear-gradient(90deg,#000 88%,transparent 100%);mask-image:linear-gradient(90deg,#000 88%,transparent 100%);">Low-Tech PBR Workshops | Low</div>
<div class="t" style="left:1568.00px;top:19.80px;font-size:19.5px;letter-spacing:0.244px;color:#1f1f1f;-webkit-text-stroke:0.35px #1f1f1f;">Gemini</div>
<div class="t" style="left:291.00px;top:81.40px;font-size:21px;letter-spacing:0.136px;color:#1f1f1f;">lowtechpbr.restoration.usu.edu<span style="color:#5b5f64">/workshops/</span></div>
<div class="t" style="left:1410.00px;top:87.50px;font-size:12.5px;letter-spacing:0.641px;color:#111;font-weight:700;font-family:'Liberation Serif', serif;">rM</div>
<div class="t" style="left:19.50px;top:138.90px;font-size:18px;letter-spacing:0.281px;color:#555555;-webkit-text-stroke:0.3px #555555;">L A R</div>
<div class="t" style="left:91.50px;top:138.90px;font-size:18px;letter-spacing:0.164px;color:#555555;-webkit-text-stroke:0.3px #555555;">Fluvial</div>
<div class="t" style="left:174.00px;top:138.90px;font-size:18px;letter-spacing:0.377px;color:#555555;-webkit-text-stroke:0.3px #555555;">Tour du Mont Blanc</div>
<div class="t" style="left:366.00px;top:138.90px;font-size:18px;letter-spacing:-1.672px;color:#555555;-webkit-text-stroke:0.3px #555555;">ACPF</div>
<div class="t" style="left:439.00px;top:138.90px;font-size:18px;letter-spacing:-0.400px;color:#555555;-webkit-text-stroke:0.3px #555555;">NRDC</div>
<div class="t" style="left:519.50px;top:138.90px;font-size:18px;letter-spacing:-0.206px;color:#555555;-webkit-text-stroke:0.3px #555555;">Houses</div>
<div class="t" style="left:711.00px;top:138.90px;font-size:18px;letter-spacing:-0.261px;color:#262626;">Habits | Reclaim</div>
<div class="t" style="left:902.00px;top:138.90px;font-size:18px;letter-spacing:-0.375px;color:#262626;">Pinned Tabs</div>
<div class="t" style="left:1054.50px;top:138.90px;font-size:18px;letter-spacing:-0.647px;color:#262626;">UPS Home</div>
<div class="t" style="left:1197.00px;top:138.90px;font-size:18px;letter-spacing:-0.115px;color:#262626;">HUC Mapper</div>
<div class="t" style="left:1331.00px;top:142.50px;font-size:10.5px;letter-spacing:0.828px;color:#fff;font-weight:700;">G</div>
<div class="t" style="left:1357.50px;top:138.90px;font-size:18px;letter-spacing:-0.386px;color:#262626;">G-Translate</div>
<div class="t" style="left:1476.00px;top:140.60px;font-size:14.5px;letter-spacing:-1.219px;color:#fff;font-weight:700;">qb</div>
<div class="t" style="left:1504.60px;top:138.90px;font-size:18px;letter-spacing:0.039px;color:#262626;">Quickbooks</div>
<div class="t" style="left:1747.40px;top:138.90px;font-size:18px;letter-spacing:-0.053px;color:#262626;">All Bookmarks</div>
</div>
<div class="g-scrollbar">
<div class="a" style="left:1860px;top:179px;width:18px;height:1124px;background:#fff"></div>
<svg class="a" style="left:1863px;top:186px" width="15" height="12" viewBox="0 0 15 12"><path d="M8.5 0.8 L15 10.6 H2 Z" fill="#8c8c8c" stroke="#8c8c8c" stroke-width="1" stroke-linejoin="round"/></svg>
<div class="a" style="left:1865px;top:207px;width:20px;height:124px;border-radius:7px;background:#8d8d8d"></div>
<svg class="a" style="left:1863px;top:1286px" width="15" height="12" viewBox="0 0 15 12"><path d="M2 1.8 H15 L8.5 10.8 Z" fill="#8c8c8c" stroke="#8c8c8c" stroke-width="1" stroke-linejoin="round"/></svg>
</div>
<div class="a" style="left:0;top:1px;width:2px;height:1301px;background:linear-gradient(180deg,#b9b4b2 0,#b5b5b5 12%,#bcbcbc 30%,#a9a9a9 40%,#b6b6b6 50%,#9f9f9f 62%,#b2b2b2 75%,#a6a6a6 100%)"></div>
<div class="a" style="left:0;top:1302.4px;width:1878px;height:8px;overflow:hidden;background:linear-gradient(90deg,#c6c7c8 0,#c0c4c7 30%,#b7bec4 60%,#b3bdc6 100%)"><div class="t" style="left:-2px;top:-6.5px;font-size:24px;letter-spacing:-0.3px;color:#1d1d1d">as?</div><div class="t" style="left:404px;top:-18.3px;font-size:24.5px;letter-spacing:0.1px;color:#3a3d40;opacity:.8">however, changing settings inside the app will override settings in the browser version of Canvas.</div></div>
<div class="a" style="left:0;top:1301.6px;width:1878px;height:1.2px;background:#8f9296"></div>
<div class="a" style="left:0;top:1294px;width:9px;height:9px;background:#c6c7c8"></div>
<div class="a" style="left:1.5px;top:1288px;width:14px;height:14.5px;background:#fff;border-bottom-left-radius:9px;border-left:1.3px solid #8a8a8a;border-bottom:1.3px solid #8a8a8a;box-sizing:border-box"></div>
</body></html>
